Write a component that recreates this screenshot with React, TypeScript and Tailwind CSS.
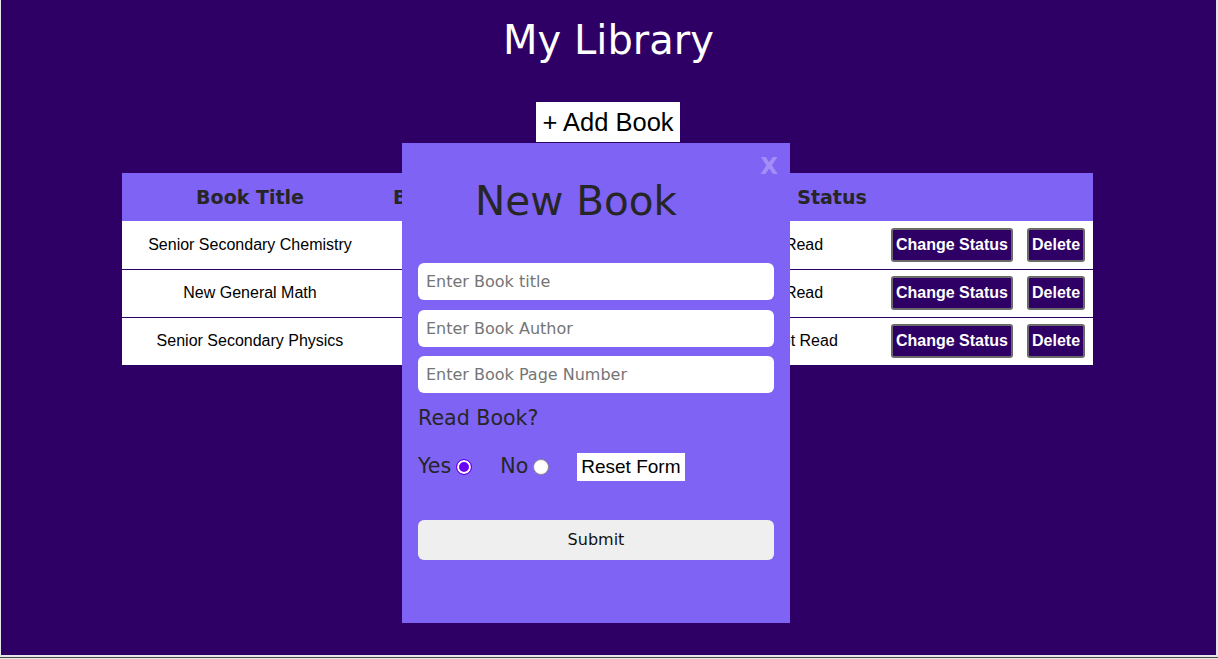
const BOOKS = [
  { title: "Senior Secondary Chemistry", author: "Osei Yaw Ababio", pages: 540, read: true },
  { title: "New General Math", author: "M. F. Macrae", pages: 320, read: true },
  { title: "Senior Secondary Physics", author: "P. N. Okeke", pages: 480, read: false },
];

export default function App() {
  return (
    <div className="h-[659px] w-[1218px] overflow-hidden bg-[#e6e6e6]">
      <div className="relative ml-[1px] mr-[2px] h-[655px] bg-[#2e0066] font-['DejaVu_Sans',sans-serif]">
        <h1 className="pt-[17px] text-center text-[40px] leading-[46.5px] text-white">
          My Library
        </h1>

        <div className="mt-[38px] flex justify-center">
          <button className="ml-[-1px] h-[40px] bg-white px-[6px] font-['Liberation_Sans',sans-serif] text-[25.5px] leading-[40px] text-black">
            + Add Book
          </button>
        </div>

        {/* Books table */}
        <div className="ml-[121px] mt-[31px] w-[971px]">
          <div className="flex h-[48px] items-center bg-[#7f63f4] pt-[2px] text-[19px] font-bold text-[#262626]">
            <div className="w-[256px] text-center">Book Title</div>
            <div className="w-[200px] pl-[15px]">Book Author</div>
            <div className="w-[150px] text-center">Pages</div>
            <div className="w-[208px] text-center">Status</div>
            <div className="flex-1" />
          </div>
          {BOOKS.map((book, i) => (
            <div
              key={i}
              className={`flex h-[48px] items-center bg-white font-['Liberation_Sans',sans-serif] text-[16px] text-black ${
                i > 0 ? "border-t border-[#2e0066]" : "pt-[1px]"
              }`}
            >
              <div className="w-[256px] text-center">{book.title}</div>
              <div className="w-[200px] text-center">{book.author}</div>
              <div className="w-[150px] text-center">{book.pages}</div>
              <div className="w-[152px] text-center">{book.read ? "Read" : "Not Read"}</div>
              <div className="flex flex-1 items-center gap-[14px] pl-[11px]">
                <button className="h-[34px] rounded-[3px] border-2 border-[#6b6b6b] bg-[#2e0066] px-[3px] text-[16px] font-bold leading-[18px] text-white">
                  Change Status
                </button>
                <button className="h-[34px] rounded-[3px] border-2 border-[#6b6b6b] bg-[#2e0066] px-[3px] text-[16px] font-bold leading-[18px] text-white">
                  Delete
                </button>
              </div>
            </div>
          ))}
        </div>

        {/* New book modal */}
        <div className="absolute left-[401px] top-[143px] flex h-[480px] w-[388px] flex-col bg-[#7f63f4] px-[16px]">
          <button className="absolute right-[12px] top-[9px] text-[23px] font-bold leading-[28px] text-white/30">
            X
          </button>
          <h2 className="ml-[57px] mt-[35px] text-[40.5px] leading-[46.5px] text-[#262626]">
            New Book
          </h2>
          <form className="mt-[38px] flex flex-col">
            <input
              placeholder="Enter Book title"
              className="h-[37px] w-full rounded-[6px] bg-white px-[8px] pt-[1px] text-[16px] text-black outline-none placeholder:text-[#757575]"
            />
            <input
              placeholder="Enter Book Author"
              className="mt-[10px] h-[37px] w-full rounded-[6px] bg-white px-[8px] pt-[1px] text-[16px] text-black outline-none placeholder:text-[#757575]"
            />
            <input
              placeholder="Enter Book Page Number"
              className="mt-[9px] h-[37px] w-full rounded-[6px] bg-white px-[8px] pt-[1px] text-[16px] text-black outline-none placeholder:text-[#757575]"
            />
            <p className="mt-[12px] text-[20.6px] leading-[26px] text-[#262626]">Read Book?</p>
            <div className="mt-[22px] flex h-[28px] items-center text-[20.6px] text-[#262626]">
              <label className="flex items-center gap-[5px]">
                Yes
                <input
                  type="radio"
                  name="read"
                  defaultChecked
                  className="m-0 h-[16px] w-[16px] appearance-none rounded-full border-[1.5px] border-[#6a00f4] bg-[#6a00f4] shadow-[inset_0_0_0_2px_white]"
                />
              </label>
              <label className="ml-[28px] flex items-center gap-[5px]">
                No
                <input
                  type="radio"
                  name="read"
                  className="m-0 h-[16px] w-[16px] appearance-none rounded-full border border-[#8c8c8c] bg-white"
                />
              </label>
              <button
                type="reset"
                className="ml-[28px] h-[28px] bg-white px-[4px] font-['Liberation_Sans',sans-serif] text-[19px] leading-[28px] text-black"
              >
                Reset Form
              </button>
            </div>
            <button
              type="button"
              className="mt-[39px] h-[40px] w-full rounded-[6px] bg-[#efefef] pt-[1px] text-[16px] text-[#111]"
            >
              Submit
            </button>
          </form>
        </div>
      </div>
      <div className="mt-[2px] h-[1px] bg-[#4a4a4a]" />
    </div>
  );
}
